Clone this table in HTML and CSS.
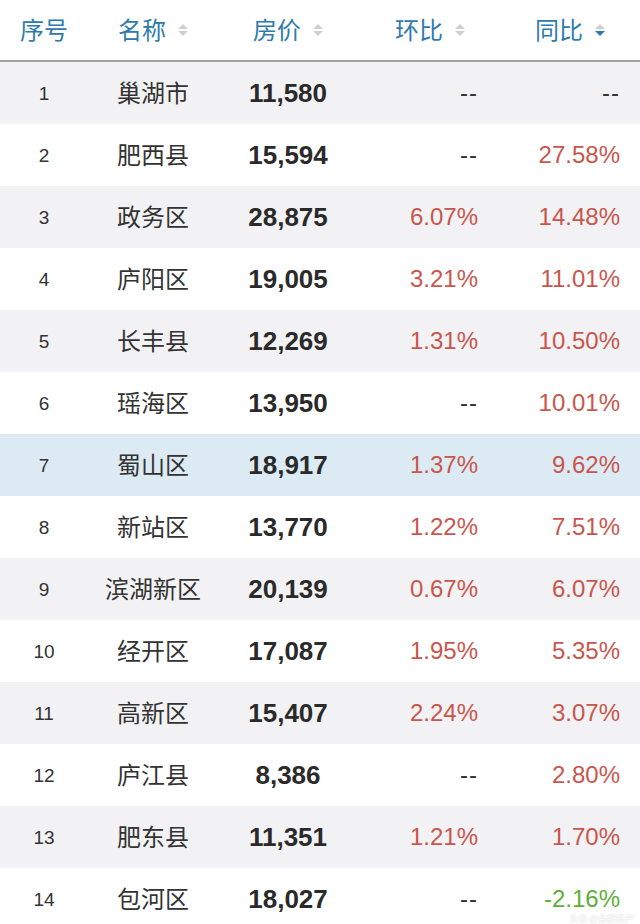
FILE: index.html
```html
<!DOCTYPE html>
<html lang="zh">
<head>
<meta charset="utf-8">
<link rel="stylesheet" href="styles.css">
</head>
<body>
<div class="table">
  <div class="row head">
    <div class="c c1">序号</div>
    <div class="c c2">名称<span class="sort"><i class="up"></i><i class="down"></i></span></div>
    <div class="c c3">房价<span class="sort"><i class="up"></i><i class="down"></i></span></div>
    <div class="c c4">环比<span class="sort"><i class="up"></i><i class="down"></i></span></div>
    <div class="c c5">同比<span class="sort"><i class="up"></i><i class="down on"></i></span></div>
  </div>
  <div class="row grey"><div class="c c1">1</div><div class="c c2">巢湖市</div><div class="c c3">11,580</div><div class="c c4 dash">--</div><div class="c c5 dash">--</div></div>
  <div class="row"><div class="c c1">2</div><div class="c c2">肥西县</div><div class="c c3">15,594</div><div class="c c4 dash">--</div><div class="c c5">27.58%</div></div>
  <div class="row grey"><div class="c c1">3</div><div class="c c2">政务区</div><div class="c c3">28,875</div><div class="c c4">6.07%</div><div class="c c5">14.48%</div></div>
  <div class="row"><div class="c c1">4</div><div class="c c2">庐阳区</div><div class="c c3">19,005</div><div class="c c4">3.21%</div><div class="c c5">11.01%</div></div>
  <div class="row grey"><div class="c c1">5</div><div class="c c2">长丰县</div><div class="c c3">12,269</div><div class="c c4">1.31%</div><div class="c c5">10.50%</div></div>
  <div class="row"><div class="c c1">6</div><div class="c c2">瑶海区</div><div class="c c3">13,950</div><div class="c c4 dash">--</div><div class="c c5">10.01%</div></div>
  <div class="row blue"><div class="c c1">7</div><div class="c c2">蜀山区</div><div class="c c3">18,917</div><div class="c c4">1.37%</div><div class="c c5">9.62%</div></div>
  <div class="row"><div class="c c1">8</div><div class="c c2">新站区</div><div class="c c3">13,770</div><div class="c c4">1.22%</div><div class="c c5">7.51%</div></div>
  <div class="row grey"><div class="c c1">9</div><div class="c c2">滨湖新区</div><div class="c c3">20,139</div><div class="c c4">0.67%</div><div class="c c5">6.07%</div></div>
  <div class="row"><div class="c c1">10</div><div class="c c2">经开区</div><div class="c c3">17,087</div><div class="c c4">1.95%</div><div class="c c5">5.35%</div></div>
  <div class="row grey"><div class="c c1">11</div><div class="c c2">高新区</div><div class="c c3">15,407</div><div class="c c4">2.24%</div><div class="c c5">3.07%</div></div>
  <div class="row"><div class="c c1">12</div><div class="c c2">庐江县</div><div class="c c3">8,386</div><div class="c c4 dash">--</div><div class="c c5">2.80%</div></div>
  <div class="row grey"><div class="c c1">13</div><div class="c c2">肥东县</div><div class="c c3">11,351</div><div class="c c4">1.21%</div><div class="c c5">1.70%</div></div>
  <div class="row"><div class="c c1">14</div><div class="c c2">包河区</div><div class="c c3">18,027</div><div class="c c4 dash">--</div><div class="c c5 green">-2.16%</div></div>
</div>
<div class="watermark">头条 @合肥房产</div>
</body>
</html>
```
FILE: styles.css
```css
html, body {
  margin: 0;
  padding: 0;
  background: #fff;
  width: 640px;
  height: 924px;
  overflow: hidden;
  font-family: "Liberation Sans", "Noto Sans CJK SC", sans-serif;
  position: relative;
}
.table {
  display: flex;
  flex-direction: column;
}
.row {
  display: grid;
  grid-template-columns: 88px 130px 140px 132px 150px;
  height: 62px;
  align-items: center;
  background: #fff;
}
.row.grey { background: #f2f2f4; }
.row.blue { background: #dcebf3; }
.row.head {
  height: 60px;
  border-bottom: 2px solid #a3a3a3;
  color: #2f7aac;
}
.c {
  display: flex;
  align-items: center;
  white-space: nowrap;
  line-height: 1;
}
.c1 {
  justify-content: center;
  font-size: 19px;
  color: #333;
}
.c2 {
  justify-content: center;
  font-family: "Noto Sans CJK SC", sans-serif;
  font-size: 24px;
  color: #333;
  padding-bottom: 3px;
}
.c3 {
  justify-content: center;
  font-size: 26px;
  font-weight: bold;
  color: #2a2a2a;
}
.c4, .c5 {
  justify-content: flex-end;
  font-size: 24px;
  color: #c9564d;
}
.c4 { padding-right: 12px; }
.c5 { padding-right: 20px; }
.dash { color: #333; letter-spacing: 1px; }
.green { color: #5fae3a; }
.head .c {
  font-family: "Noto Sans CJK SC", sans-serif;
  font-size: 24px;
  color: #2f7aac;
  font-weight: normal;
  padding-bottom: 3px;
}
.head .c4 { padding-right: 25px; }
.head .c5 { padding-right: 35px; }
.sort {
  display: inline-flex;
  flex-direction: column;
  gap: 2px;
  margin-left: 12px;
  padding-top: 3px;
}
.sort i {
  display: block;
  width: 0;
  height: 0;
  border-left: 5px solid transparent;
  border-right: 5px solid transparent;
}
.sort .up { border-bottom: 5px solid #cfcfcf; }
.sort .down { border-top: 5px solid #cfcfcf; }
.sort .down.on { border-top-color: #2f7aac; }
.watermark {
  position: absolute;
  right: 6px;
  top: 914px;
  font-family: "Noto Sans CJK SC", sans-serif;
  font-size: 9px;
  line-height: 10px;
  color: rgba(255,255,255,0.9);
  text-shadow: 0 0 2px rgba(170,170,170,0.6);
}
```
